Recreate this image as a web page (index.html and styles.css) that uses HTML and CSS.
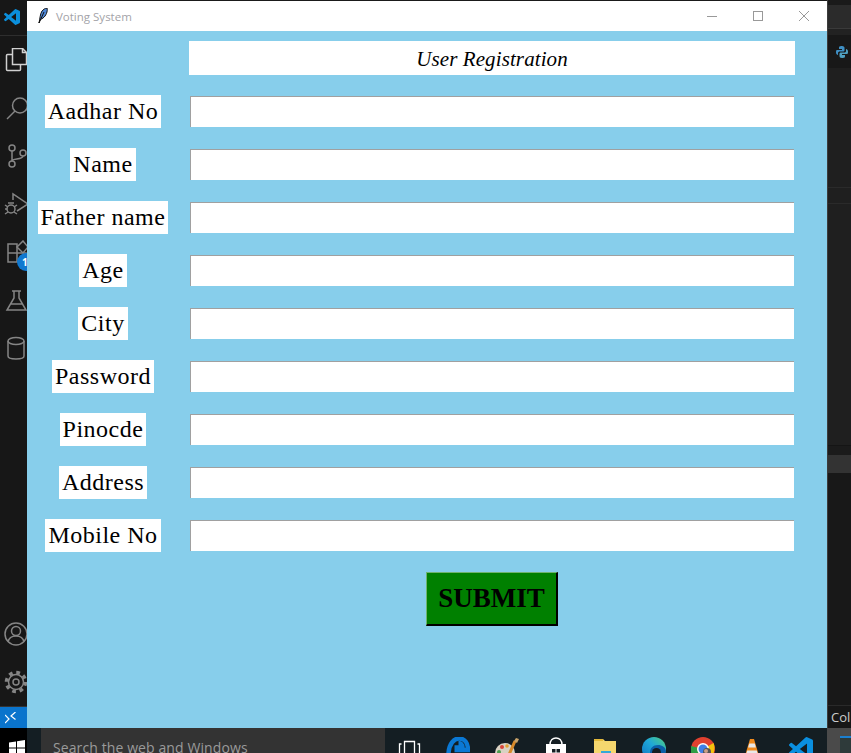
FILE: index.html
```html
<!DOCTYPE html>
<html lang="en">
	<head>
		<meta charset="UTF-8" />
		<meta name="viewport" content="width=device-width, initial-scale=1.0" />
		<title>Voting System</title>
		<link rel="stylesheet" href="styles.css">
	</head>
	<body>
		<svg class="defs" width="0" height="0">
			<symbol id="vscode" viewBox="0 0 24 24">
				<path d="M23.15 2.587L18.21.21a1.494 1.494 0 0 0-1.705.29l-9.46 8.63-4.12-3.128a.999.999 0 0 0-1.276.057L.327 7.261A1 1 0 0 0 .326 8.74L3.899 12 .326 15.26a1 1 0 0 0 .001 1.479L1.65 17.94a.999.999 0 0 0 1.276.057l4.12-3.128 9.46 8.63a1.492 1.492 0 0 0 1.704.29l4.942-2.377A1.5 1.5 0 0 0 24 20.06V3.939a1.5 1.5 0 0 0-.85-1.352zm-5.146 14.861L10.826 12l7.178-5.448v10.896z" />
			</symbol>
		</svg>

		<div class="desktop">
			<nav class="activity-bar">
				<div class="logo-item">
					<svg class="logo" width="16" height="16"><use href="#vscode" /></svg>
				</div>
				<div class="activity-item">
					<svg class="icon icon-active" viewBox="0 0 24 24">
						<rect x="2.5" y="6.5" width="14" height="16" rx="1" />
						<path class="page" d="M8.5 .5h10l4 4v12h-14z" />
						<path d="M18.5 .5v4h4" />
					</svg>
				</div>
				<div class="activity-item">
					<svg class="icon" viewBox="0 0 24 24">
						<circle cx="16" cy="9.5" r="7.5" />
						<path d="M11 15l-8 8" />
					</svg>
				</div>
				<div class="activity-item">
					<svg class="icon" viewBox="0 0 24 24">
						<circle cx="8" cy="4" r="3" />
						<circle cx="8" cy="20" r="3" />
						<circle cx="19" cy="9" r="3" />
						<path d="M8 7v10M19 12c0 4-11 2-11 5" />
					</svg>
				</div>
				<div class="activity-item">
					<svg class="icon" viewBox="0 0 24 24">
						<path d="M9 8V2l15 10-11 7" />
						<circle cx="7" cy="17" r="4" />
						<path d="M1 13l3 2M1 17h2M1 22l3-2M13 13l-3 2M13 22l-3-2M4 11h6" />
					</svg>
				</div>
				<div class="activity-item">
					<svg class="icon" viewBox="0 0 24 24">
						<path d="M4 4h9v18H4zM4 13h18v9h-9" />
						<path d="M19 1l5 6-5 6-6-6z" />
					</svg>
					<span class="badge">1</span>
				</div>
				<div class="activity-item">
					<svg class="icon" viewBox="0 0 24 24">
						<path d="M8 3h9M10 3v7L3 22h19L15 10V3M7 16h11" />
					</svg>
				</div>
				<div class="activity-item">
					<svg class="icon" viewBox="0 0 24 24">
						<ellipse cx="12" cy="5" rx="8" ry="3.5" />
						<path d="M4 5v15c0 2 4 3 8 3s8-1 8-3V5" />
					</svg>
				</div>
				<div class="activity-bottom">
					<div class="activity-item">
						<svg class="icon" viewBox="0 0 24 24">
							<circle cx="12" cy="12" r="11" />
							<circle cx="12" cy="9" r="4.5" />
							<path d="M4 20c1-5 4-6 8-6s7 1 8 6" />
						</svg>
					</div>
					<div class="activity-item">
						<svg class="icon" viewBox="0 0 24 24">
							<circle cx="12" cy="12" r="3" />
							<circle cx="12" cy="12" r="7.5" />
							<circle class="teeth" cx="12" cy="12" r="9.5" />
						</svg>
					</div>
				</div>
				<div class="remote-bar">
					<svg width="11" height="12" viewBox="0 0 11 12">
						<path d="M0 3l4 4-4 4M10.500 0L6 4l4.500 3.500" />
					</svg>
				</div>
			</nav>

			<section class="window">
				<header class="title-bar">
					<svg class="feather" width="10" height="16" viewBox="0 0 10 16">
						<path d="M1 15C2 11 2 6 4 3c1-1 3-3 5-3 1 3-1 8-4 10-1 1-2 1-3 2z" fill="#4d86d6" stroke="#111" stroke-width="1" />
						<path d="M1 15L6 4" stroke="#111" stroke-width="1" />
					</svg>
					<span class="title-text">Voting System</span>
					<div class="window-controls">
						<span class="win-btn"><svg width="10" height="10"><path d="M0 5.500h10" /></svg></span>
						<span class="win-btn"><svg width="10" height="10"><rect x=".5" y=".5" width="9" height="9" /></svg></span>
						<span class="win-btn"><svg width="10" height="10"><path d="M0 0l10 10M10 0L0 10" /></svg></span>
					</div>
				</header>

				<form class="reg-form">
					<div class="form-title">User Registration</div>

					<label class="field-label">Aadhar No</label>
					<input class="field-input" type="text" />
					<label class="field-label">Name</label>
					<input class="field-input" type="text" />
					<label class="field-label">Father name</label>
					<input class="field-input" type="text" />
					<label class="field-label">Age</label>
					<input class="field-input" type="text" />
					<label class="field-label">City</label>
					<input class="field-input" type="text" />
					<label class="field-label">Password</label>
					<input class="field-input" type="text" />
					<label class="field-label">Pinocde</label>
					<input class="field-input" type="text" />
					<label class="field-label">Address</label>
					<input class="field-input" type="text" />
					<label class="field-label">Mobile No</label>
					<input class="field-input" type="text" />

					<button class="submit-btn" type="button">SUBMIT</button>
				</form>
			</section>

			<aside class="side-rail">
				<div class="rail-top"></div>
				<div class="rail-tab"></div>
				<div class="rail-gap"></div>
				<div class="rail-python">
					<svg width="14" height="14" viewBox="0 0 14 14">
						<path d="M7 1C4 1 4 2 4 3v1h3v1H2C1 5 1 6 1 7.500S2 10 3 10V8c0-1 1-1.500 2-1.500h3c1 0 1.500-.5 1.500-1.500V3C9.500 2 9 1 7 1z" fill="#3f8fc4" />
						<path d="M7 13c3 0 3-1 3-2v-1H7V9h5c1 0 1-1 1-2.500S12 4 11 4v2c0 1-1 1.500-2 1.500H6C5 7.500 4.500 8 4.500 9v2c0 1 .5 2 2.500 2z" fill="#4f9fc0" />
					</svg>
				</div>
				<div class="rail-panel"></div>
				<div class="rail-strip"></div>
				<div class="rail-panel-2"></div>
				<div class="rail-sash"></div>
				<div class="rail-band"></div>
				<div class="rail-dark"></div>
				<div class="rail-status">Col</div>
			</aside>
		</div>

		<footer class="taskbar">
			<div class="start">
				<svg width="16" height="16" viewBox="0 0 16 16">
					<path d="M0 2.500l7-1v6H0zM8 1.300l8-1.300v7.500H8zM0 8.500h7v6l-7-1zM8 8.500h8V16l-8-1.300z" fill="#fff" />
				</svg>
			</div>
			<div class="search">Search the web and Windows</div>
			<div class="task-icons">
				<svg class="task-icon" viewBox="0 0 24 24">
					<path d="M7.500 4.500h10v16h-10zM4.500 7H2.500v11h2M20.500 7h2v11h-2" fill="none" stroke="#fff" stroke-width="1.300" />
				</svg>
				<svg class="task-icon" viewBox="0 0 24 24">
					<path d="M2.500 16C3 7 8 1.500 13 1.500c6 0 9 5 9 11.500H8.500M8.500 10.500h8c0-3-2-4.500-4-4.500" fill="none" stroke="#0a78d4" stroke-width="4.500" />
				</svg>
				<svg class="task-icon" viewBox="0 0 24 24">
					<ellipse cx="10" cy="16" rx="10" ry="10" fill="#d9d2c3" />
					<circle cx="7" cy="10" r="2" fill="#d8453a" />
					<circle cx="12" cy="9" r="1.800" fill="#e0a030" />
					<circle cx="4" cy="15" r="2" fill="#4f9d50" />
					<path d="M13 20L20 4" stroke="#d88a2a" stroke-width="3" />
					<path d="M19 4l2-3 3 1-2 4z" fill="#c9a36a" />
				</svg>
				<svg class="task-icon" viewBox="0 0 24 24">
					<path d="M6 8c0-5 3-7 6-7s6 2 6 7" fill="none" stroke="#fff" stroke-width="1.500" />
					<path d="M2 7h20v17H2z" fill="#fff" />
					<path d="M8 12h3.500v3.500H8zM12.500 12H16v3.500h-3.500zM8 16.500h3.500V20H8zM12.500 16.500H16V20h-3.500z" fill="#141e23" />
				</svg>
				<svg class="task-icon" viewBox="0 0 24 24">
					<path d="M1 2h9l2 2h11v20H1z" fill="#f5d76e" />
					<path d="M1 2h9v2H1z" fill="#e4b93a" />
					<path d="M8 14h10v10H8z" fill="#35a8d8" />
					<path d="M11 17h4v7h-4z" fill="#f5d76e" />
				</svg>
				<svg class="task-icon" viewBox="0 0 24 24">
					<defs>
						<linearGradient id="edgeFill" x1="0" y1="1" x2="1" y2="0">
							<stop offset="0" stop-color="#0c6fc0" />
							<stop offset=".55" stop-color="#1fa8d8" />
							<stop offset="1" stop-color="#52cf7a" />
						</linearGradient>
					</defs>
					<circle cx="12" cy="12" r="12" fill="url(#edgeFill)" />
					<path d="M24 15c0-5-4-7-8-7-5 0-8 3-8 8 0 3 1 6 4 8-2 0-6 0-9-3 5 1 9-2 12-3 3 0 4 1 9-3z" fill="#0b5fa8" />
					<circle cx="14.500" cy="15.500" r="4.500" fill="#141e23" />
				</svg>
				<svg class="task-icon" viewBox="0 0 24 24">
					<circle cx="12" cy="12" r="12" fill="#e0402f" />
					<path d="M12 12L0 9v6c0 5 4 9 9 9z" fill="#2f9e46" />
					<path d="M12 12l10.500-6C24 9 24 15 21 19l-9 5z" fill="#f4c20d" />
					<circle cx="12" cy="12" r="6" fill="#fff" />
					<circle cx="12" cy="12" r="4.500" fill="#3f7fe8" />
					<circle cx="16" cy="15" r="4" fill="#555" />
					<circle cx="15" cy="14" r="2" fill="#c99f85" />
				</svg>
				<svg class="task-icon" viewBox="0 0 24 24">
					<path d="M10 2h4l6 20H4z" fill="#f08a1c" />
					<path d="M9.300 6.500h5.400l1.200 4H8.100zM7.200 13.500h9.600l1 3.500H6.200z" fill="#e8e8e8" />
				</svg>
				<svg class="task-icon task-code" viewBox="0 0 24 24"><use href="#vscode" /></svg>
			</div>
			<div class="task-thumb"><span class="thumb-inner"></span></div>
		</footer>
	</body>
</html>
```

FILE: styles.css
```css
:root {
	--sky: #87ceeb;
	--bar-bg: #171717;
	--icon-color: #858585;
	--taskbar-bg: #141e23;
	--serif: 'Liberation Serif', serif;
	--ui-font: 'Open Sans', 'Noto Sans', sans-serif;
}

html,
body {
	margin: 0;
	padding: 0;
	height: 100%;
	overflow: hidden;
	background-color: #1a1a1a;
}

body {
	display: flex;
	flex-direction: column;
	width: 851px;
	height: 753px;
}

.defs {
	position: absolute;
}

.desktop {
	display: flex;
	height: 728px;
}

/* editor activity bar, mostly hidden behind the window */
.activity-bar {
	position: relative;
	flex: 0 0 27px;
	display: flex;
	flex-direction: column;
	overflow: hidden;
	background-color: var(--bar-bg);
}

.logo-item {
	flex: 0 0 36px;
	padding: 9px 0 0 4px;
	box-sizing: border-box;
	border-bottom: 1px solid #2e2e2e;
}

.logo {
	display: block;
	fill: #0b8fdc;
}

.activity-item {
	position: relative;
	flex: 0 0 48px;
	display: flex;
	align-items: center;
	padding-left: 4px;
}

.icon {
	flex: 0 0 24px;
	width: 24px;
	height: 24px;
	fill: none;
	stroke: var(--icon-color);
	stroke-width: 1.5;
}

.icon-active {
	stroke: #d0d0d0;
}

.icon-active .page {
	fill: var(--bar-bg);
}

.teeth {
	stroke-width: 3.5;
	stroke-dasharray: 3.7 3.76;
}

.badge {
	position: absolute;
	left: 17px;
	top: 25px;
	width: 18px;
	height: 18px;
	border-radius: 50%;
	background-color: #0f78d0;
	color: #fff;
	font: 700 10px/18px var(--ui-font);
	padding-left: 5px;
	box-sizing: border-box;
}

.activity-bottom {
	display: flex;
	flex-direction: column;
	margin-top: auto;
	border-bottom: 1px solid #333;
}

.remote-bar {
	flex: 0 0 21px;
	display: flex;
	align-items: center;
	padding-left: 5px;
	background-color: #0a74cc;
}

.remote-bar path {
	fill: none;
	stroke: #fff;
	stroke-width: 1.2;
}

/* tkinter window */
.window {
	flex: 0 0 800px;
	display: flex;
	flex-direction: column;
	margin-top: 1px;
	background-color: var(--sky);
}

.title-bar {
	flex: 0 0 30px;
	display: flex;
	align-items: center;
	padding-left: 11px;
	background-color: #fff;
}

.feather {
	margin-right: 8px;
}

.title-text {
	font: 11.5px var(--ui-font);
	color: #a3a3a8;
}

.window-controls {
	display: flex;
	margin-left: auto;
}

.win-btn {
	display: flex;
	align-items: center;
	justify-content: center;
	width: 46px;
	height: 30px;
}

.win-btn svg {
	fill: none;
	stroke: #999;
	stroke-width: 1;
}

.reg-form {
	display: grid;
	grid-template-columns: 152px 606px;
	grid-template-rows: 34px;
	grid-auto-rows: 33px;
	column-gap: 10px;
	row-gap: 20px;
	padding-top: 10px;
}

.form-title {
	grid-column: 2;
	font: italic 21px/36px var(--serif);
	letter-spacing: .1px;
	text-align: center;
	color: #000;
	background-color: #fff;
}

.field-label {
	grid-column: 1;
	justify-self: center;
	padding: 0 3px;
	font: 24px/33px var(--serif);
	letter-spacing: .5px;
	color: #000;
	background-color: #fff;
	white-space: nowrap;
}

.field-input {
	grid-column: 2;
	align-self: center;
	height: 31px;
	margin: 0 1px;
	padding: 0;
	box-sizing: border-box;
	background-color: #fff;
	border: none;
	border-top: 1px solid #a0a0a0;
	border-left: 1px solid #a0a0a0;
	outline: none;
}

.submit-btn {
	grid-column: 2;
	justify-self: center;
	width: 132px;
	height: 54px;
	padding: 0;
	font: 700 27px var(--serif);
	color: #000;
	background-color: #008000;
	border-style: solid;
	border-width: 1px 2px 2px 1px;
	border-color: #6fb36f #000 #000 #6fb36f;
}

/* right edge of the editor */
.side-rail {
	flex: 0 0 24px;
	display: flex;
	flex-direction: column;
	box-sizing: border-box;
	border-left: 1px solid #3c3c3c;
	background-color: #1f1f1f;
}

.rail-top {
	flex: 0 0 5px;
	background-color: #1a1a1a;
}

.rail-tab {
	flex: 0 0 23px;
	background-color: #2b2b2b;
}

.rail-gap {
	flex: 0 0 7px;
	box-sizing: border-box;
	border-top: 1px solid #3a3a3a;
	background-color: #222;
}

.rail-python {
	flex: 0 0 33px;
	display: flex;
	align-items: center;
	padding-left: 7px;
	background-color: #181818;
}

.rail-panel {
	flex: 0 0 120px;
	border-bottom: 1px solid #2a2a2a;
	box-sizing: border-box;
}

.rail-strip {
	flex: 0 0 16px;
	border-bottom: 1px solid #2a2a2a;
	box-sizing: border-box;
}

.rail-panel-2 {
	flex: 0 0 242px;
	border-bottom: 1px solid #151515;
	box-sizing: border-box;
}

.rail-sash {
	flex: 0 0 9px;
	background-color: #1b1b1b;
}

.rail-band {
	flex: 0 0 18px;
	background-color: #333;
}

.rail-dark {
	flex: 0 0 233px;
	background-color: #181818;
	border-bottom: 1px solid #2a2a2a;
	box-sizing: border-box;
}

.rail-status {
	flex: 1;
	padding-left: 3px;
	font: 13px/23px var(--ui-font);
	color: #ccc;
	background-color: #171717;
	white-space: nowrap;
	overflow: hidden;
}

/* windows taskbar, cut by the bottom of the picture */
.taskbar {
	flex: 0 0 25px;
	display: flex;
	overflow: hidden;
	background-color: var(--taskbar-bg);
}

.start {
	flex: 0 0 41px;
	box-sizing: border-box;
	padding: 12px 0 0 9px;
	background: linear-gradient(to right, #000 27px, var(--taskbar-bg) 27px);
}

.search {
	flex: 0 0 344px;
	box-sizing: border-box;
	padding: 9px 0 0 12px;
	font: 14px/22px var(--ui-font);
	letter-spacing: .1px;
	color: #9a9a9a;
	background-color: #333;
	white-space: nowrap;
}

.task-icons {
	display: flex;
	gap: 25px;
	margin-left: 12px;
	padding-top: 9px;
}

.task-icon {
	flex: 0 0 24px;
	width: 24px;
	height: 24px;
}

.task-code {
	fill: #0a8fe0;
}

.task-thumb {
	flex: 0 0 24px;
	margin-left: auto;
	padding: 8px 0 0 13px;
	box-sizing: border-box;
	background-color: #4a4a4a;
}

.thumb-inner {
	display: block;
	height: 20px;
	border-top: 2px solid #1b7fd0;
	background-color: #2e3a3a;
}
```
